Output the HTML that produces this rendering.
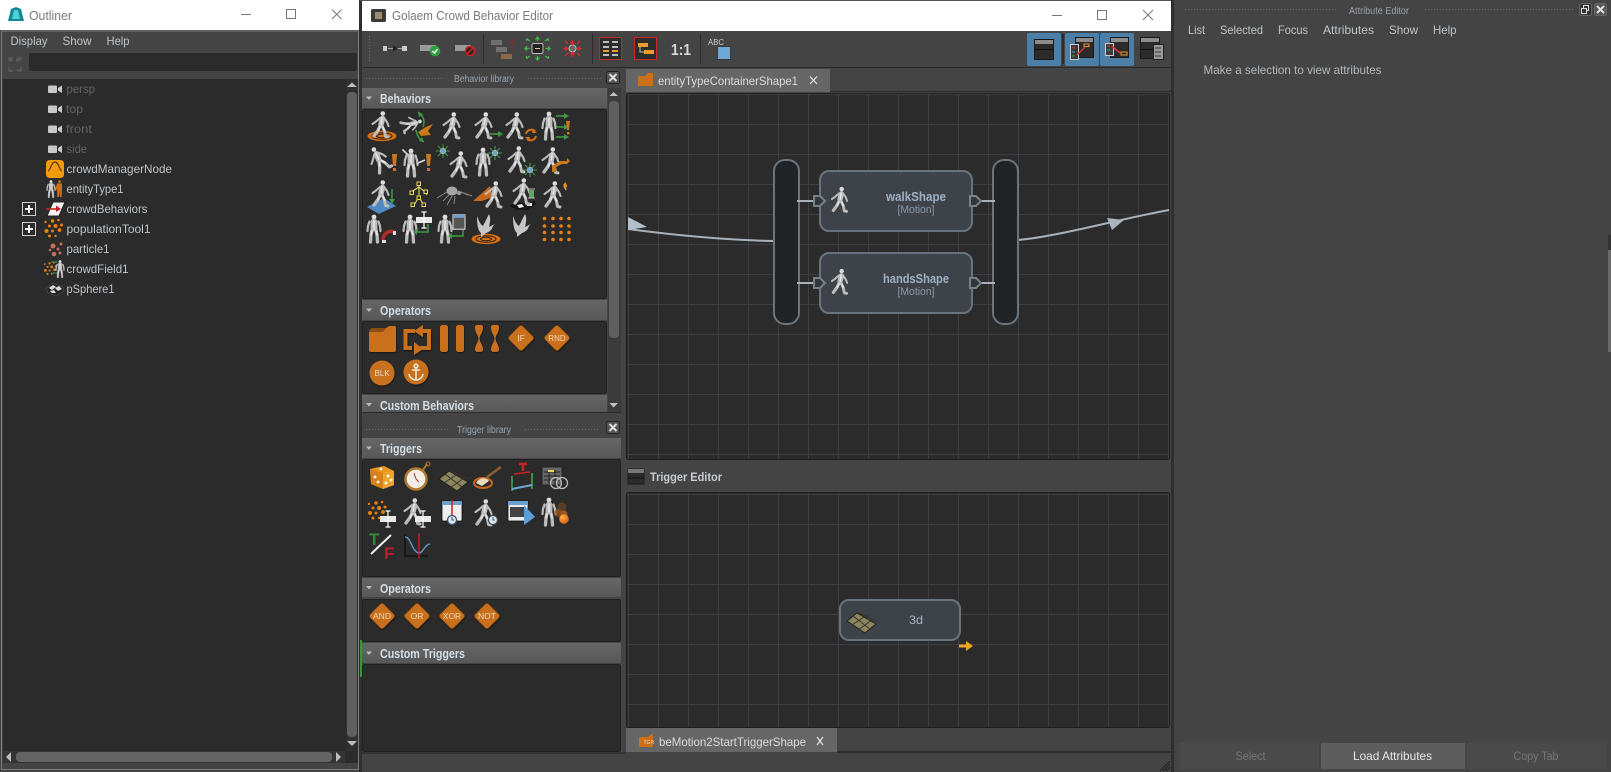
<!DOCTYPE html>
<html><head><meta charset="utf-8"><title>Golaem Crowd Behavior Editor</title>
<style>
html,body{margin:0;padding:0;background:#444;width:1611px;height:772px;overflow:hidden}
svg{display:block}
text{font-family:"Liberation Sans",sans-serif;font-size:12px;fill:#c0c4c7}
.t{font-size:13px;fill:#76797d}
.dim{fill:#636363}
.h{font-weight:bold;font-size:12.5px;fill:#d5dde3}
.sm{font-size:10px;fill:#9aa3ab}
.n{font-weight:bold;font-size:12.5px;fill:#9fb0c2}
.m{font-size:11px;fill:#8c99a7}
.o{font-size:7.5px;fill:#f0d9bd;text-anchor:middle}
</style></head><body>
<svg width="1611" height="772" viewBox="0 0 1611 772" xmlns="http://www.w3.org/2000/svg">
<defs>
<filter id="sh" x="-20%" y="-20%" width="140%" height="140%"><feDropShadow dx="0.6" dy="1" stdDeviation="0.6" flood-color="#111" flood-opacity=".8"/></filter>
<pattern id="g1" patternUnits="userSpaceOnUse" x="628" y="94" width="30" height="30"><rect width="30" height="30" fill="#2b2b2b"/><rect width="30" height="1" fill="#3b3e43"/><rect width="1" height="30" fill="#3b3e43"/></pattern>
<pattern id="g2" patternUnits="userSpaceOnUse" x="628" y="494" width="30" height="30"><rect width="30" height="30" fill="#2b2b2b"/><rect width="30" height="1" fill="#3b3e43"/><rect width="1" height="30" fill="#3b3e43"/></pattern>
<pattern id="dots" patternUnits="userSpaceOnUse" width="3" height="3"><rect width="1" height="1" fill="#6b6b6b"/></pattern>
<linearGradient id="hd" x1="0" y1="0" x2="0" y2="1"><stop offset="0" stop-color="#666"/><stop offset="1" stop-color="#585858"/></linearGradient>
<radialGradient id="ball" cx=".35" cy=".3" r=".8"><stop offset="0" stop-color="#ffb24a"/><stop offset="1" stop-color="#d45a08"/></radialGradient>
<g id="walk" fill="none" stroke="#bcbcbc" stroke-linecap="round" stroke-linejoin="round">
<circle cx="1.800" cy="-11.500" r="2.300" fill="#dcdcdc" stroke="none"/>
<path d="M1.500-6.500L0-.5" stroke-width="5.600"/>
<path d="M-1-7L-5-3.500L-8.500-1" stroke-width="2.100"/>
<path d="M3.500-6.500L6-3L7.500 1" stroke-width="2.100"/>
<path d="M-1 1L-3 5.500L-7 11" stroke-width="3.300"/>
<path d="M1 1L3.500 6L4.500 11.500L7 12" stroke-width="3"/>
<path d="M1.200-7.500L.3-1M-1 2L-3 5.500M2 2L3.500 6" stroke="#e6e6e6" stroke-width="1.500"/>
</g>
<g id="stand" fill="none" stroke="#bcbcbc" stroke-linecap="round" stroke-linejoin="round">
<circle cx="0" cy="-12" r="2.400" fill="#dcdcdc" stroke="none"/>
<path d="M0-7L0-1" stroke-width="6.800"/>
<path d="M-2 1L-3 6L-3.500 13" stroke-width="3.300"/>
<path d="M2 1L3 6L3.500 13" stroke-width="3.300"/>
<path d="M-4.500-7.500L-6-3L-6.500 2" stroke-width="2.200"/>
<path d="M4.500-7.500L6-3L6.500 2" stroke-width="2.200"/>
<path d="M0-8V0M-2 2L-3 6M2 2L3 6" stroke="#e6e6e6" stroke-width="1.500"/>
</g>
<g id="bird" fill="#c6c6c6"><path d="M-9-12C-7-7-6-4-3-2C-1-6 1-10 3-14C5-10 4-5 3-1L9-4L7-2C6 2 3 4 0 5L-5 9L-5 5C-8 3-9-4-9-12Z"/></g>
<g id="star" stroke="#3f9a45" stroke-width="1.100" fill="none"><path d="M0-7V7M-7 0H7M-5-5L5 5M-5 5L5-5"/><circle r="2.700" fill="#6fa4c4" stroke="#b7d3e3" stroke-width=".6"/></g>
<g id="tgt" fill="none"><ellipse rx="14.500" ry="5.200" fill="#d87012"/><ellipse rx="10" ry="3.300" stroke="#2a2018" stroke-width="1"/><ellipse rx="5.500" ry="1.700" stroke="#2a2018" stroke-width="1"/></g>
<g id="tile"><path d="M-14-2L-4-10L15 1L4 10Z" fill="#8b8560" stroke="#24221a" stroke-width="1"/><path d="M-8-7L9 6M-2-10L15-2M-9 2L6-8M-3 7L11-3" stroke="#37352a" stroke-width="1"/></g>
<g id="ibeam"><rect x="-8" y="-3" width="16" height="6" fill="#e8e8e8"/><path d="M-2.500-8H2.500M0-8V8M-2.500 8H2.500" stroke="#fff" stroke-width="1.200" fill="none"/></g>
<g id="clock"><circle r="4.500" fill="#dfe8ee" stroke="#37536a" stroke-width="1.300"/><path d="M0-3V0H2" stroke="#37536a" fill="none"/></g>
<g id="win"><rect x="-10" y="-10" width="20" height="20" fill="#eee" stroke="#111" stroke-width=".8"/><rect x="-10" y="-10" width="20" height="4" fill="#6c9fc9"/></g>
<g id="dia"><rect x="-10" y="-10" width="20" height="20" rx="2.500" transform="rotate(45)" fill="#c8701a" stroke="#8e4c0e" stroke-width=".6"/></g>
<g id="cam"><rect x="-7" y="-3.500" width="9" height="7.500" rx="1" fill="#c9c9c9"/><path d="M3-1L7-3.500V4L3 1.500Z" fill="#c9c9c9"/></g>
<g id="dust" fill="#e8800f"><circle cx="-9" cy="-7" r="1.200"/><circle cx="-2" cy="-8" r="1.700"/><circle cx="4" cy="-9" r="1.300"/><circle cx="-5" cy="-3" r="1.500"/><circle cx="1" cy="-3" r="2"/><circle cx="7" cy="-4" r="1.500"/><circle cx="-8" cy="2" r="2"/><circle cx="-2" cy="2" r="1.500"/><circle cx="5" cy="1" r="1.900"/><circle cx="-5" cy="7" r="1.500"/><circle cx="1" cy="7" r="1.200"/></g>
<g id="bg" ><path d="M0 0H8" stroke="#3f9a45" stroke-width="1.600"/><path d="M8-3L13 0L8 3Z" fill="#3f9a45"/></g>
<path id="hg" d="M475 327Q475 325 477 325H481Q483 325 483 327C483 333 479.500 335 479.500 338.500C479.500 342 483 345 483 350Q483 352 479 352Q475 352 475 350C475 345 478.500 342 478.500 338.500C478.500 335 475 333 475 327Z" fill="#c8701a"/>
</defs>

<rect width="1611" height="772" fill="#444"/>

<!-- Outliner -->
<rect x="0" y="0" width="360" height="30" fill="#fff"/>
<path d="M8 21L11 9L16 7L21 9L24 21Z" fill="#0f8a96"/><path d="M14 10L12 19H20L18 10Z" fill="#50d0d8"/>
<text class="t" x="29" y="20" textLength="43" lengthAdjust="spacingAndGlyphs">Outliner</text>
<path d="M241 14.500H251" stroke="#777" fill="none"/><rect x="286.500" y="9.500" width="9" height="9" fill="none" stroke="#777"/><path d="M332 9.500L341.500 19M341.500 9.500L332 19" stroke="#777" fill="none"/>
<rect x="1" y="30" width="358" height="742" fill="#444"/>
<path d="M1.500 31V769.500H358.500V31H1.500" fill="none" stroke="#7d7d7d"/>
<text x="10.500" y="45" textLength="37" lengthAdjust="spacingAndGlyphs">Display</text><text x="62.500" y="45" textLength="29" lengthAdjust="spacingAndGlyphs">Show</text><text x="106.500" y="45" textLength="23" lengthAdjust="spacingAndGlyphs">Help</text>
<rect x="29" y="53" width="328" height="18" rx="2" fill="#2b2b2b"/>
<g fill="none" stroke="#5c5c5c" stroke-width="1.500"><path d="M9 60V58H13M18 58H21V60M21 67V71H18M13 71H9V67"/></g>
<path d="M9 58L14 60L9 62ZM16 58L22 60L16 62ZM10 69L14 71H9ZM17 69L22 71H17Z" fill="#5c5c5c"/>
<rect x="3" y="79" width="355" height="672" fill="#2b2b2b"/>
<rect x="346" y="79" width="12" height="672" fill="#303030"/>
<path d="M347 87L352 82.500L357 87Z" fill="#bdbdbd"/>
<rect x="347" y="92" width="10" height="645" rx="4" fill="#5f5f5f"/>
<path d="M347 741H357L352 746Z" fill="#bdbdbd"/>
<rect x="3" y="751" width="355" height="12" fill="#343434"/><rect x="345" y="751" width="13" height="12" fill="#2b2b2b"/>
<rect x="16" y="752" width="316" height="10" rx="4" fill="#646464"/>
<path d="M11 752V762L6 757Z" fill="#bdbdbd"/><path d="M336 752V762L341 757Z" fill="#bdbdbd"/>
<use href="#cam" x="55" y="89"/><use href="#cam" x="55" y="109"/><use href="#cam" x="55" y="129"/><use href="#cam" x="55" y="149"/>
<text class="dim" x="66.500" y="93" textLength="28.500" lengthAdjust="spacingAndGlyphs">persp</text>
<text class="dim" x="66" y="113" textLength="17" lengthAdjust="spacingAndGlyphs">top</text>
<text class="dim" x="66" y="133" textLength="26" lengthAdjust="spacingAndGlyphs">front</text>
<text class="dim" x="66.500" y="153" textLength="20.500" lengthAdjust="spacingAndGlyphs">side</text>
<rect x="46" y="160" width="18" height="18" rx="3.500" fill="#f09a0e"/><path d="M48 171C51 170 51 162 55 162C59 162 59 170 62 171" fill="none" stroke="#3e2a08"/>
<g transform="translate(51 189) scale(.62)"><use href="#stand"/></g>
<g transform="translate(59.500 189) scale(.62)"><path d="M0-14.300a2.300 2.300 0 1 0 .1 0ZM-4-9H4V0L3.500 13H.8L0 2L-.8 13H-3.500L-4 0L-6.500 3L-7 1Z" fill="#d06f12"/></g>
<path d="M53 202H65L59 216H47Z" fill="#f4f4f4" stroke="#222"/><path d="M46 209H58" stroke="#c82020" stroke-width="1.600"/><path d="M56 205.500L61 209L56 212Z" fill="#c82020"/>
<g transform="translate(54.500 229)"><use href="#dust"/></g>
<g fill="#c86d5e"><circle cx="53" cy="246" r="2.500"/><circle cx="58" cy="249" r="1.500"/><circle cx="61" cy="244" r="1.500"/><circle cx="50" cy="250" r="1.300"/><circle cx="54" cy="254" r="2.300"/><circle cx="60" cy="253" r="1.500"/></g>
<g transform="translate(51 269) scale(.7)"><use href="#dust"/></g><path d="M51 262H57M51 273H57" stroke="#3f9a45"/>
<g transform="translate(60 269) scale(.62)"><use href="#stand"/></g>
<path d="M46 289L53 283L63 287L64 291L56 296L48 293Z" fill="#222" stroke="#444"/><path d="M49 288L53 285L56 287L52 290ZM55 288L59 286L62 289L58 291ZM50 291L54 290L56 293L52 293Z" fill="#ddd"/>
<text x="66.500" y="173" textLength="105.500" lengthAdjust="spacingAndGlyphs">crowdManagerNode</text>
<text x="66.500" y="193" textLength="57" lengthAdjust="spacingAndGlyphs">entityType1</text>
<text x="66.500" y="213" textLength="81" lengthAdjust="spacingAndGlyphs">crowdBehaviors</text>
<text x="66.500" y="233" textLength="84" lengthAdjust="spacingAndGlyphs">populationTool1</text>
<text x="66.500" y="253" textLength="43" lengthAdjust="spacingAndGlyphs">particle1</text>
<text x="66.500" y="273" textLength="62" lengthAdjust="spacingAndGlyphs">crowdField1</text>
<text x="66.500" y="293" textLength="48" lengthAdjust="spacingAndGlyphs">pSphere1</text>
<g fill="none" stroke="#cfcfcf"><rect x="22.500" y="202.500" width="13" height="13"/><rect x="22.500" y="222.500" width="13" height="13"/></g>
<path d="M25 209H33M29 205V213M25 229H33M29 225V233" stroke="#eee" stroke-width="2"/>

<!-- strip -->
<rect x="359" y="0" width="3" height="772" fill="#2f2f2f"/>
<rect x="360" y="640" width="2" height="37" fill="#2f9a3a"/>

<!-- Editor window -->
<rect x="362" y="0" width="809" height="31" fill="#fff"/>
<rect x="360" y="0" width="812" height="1" fill="#555"/>
<rect x="371" y="9" width="15" height="13" rx="1.500" fill="#3a3a3a"/><rect x="375" y="12" width="7" height="7" fill="#a08a70"/>
<text class="t" x="392" y="20" textLength="161" lengthAdjust="spacingAndGlyphs">Golaem Crowd Behavior Editor</text>
<path d="M1052 15.500H1062" stroke="#777"/><rect x="1097.500" y="10.500" width="9" height="9" fill="none" stroke="#777"/><path d="M1143 10L1153 20M1153 10L1143 20" stroke="#777"/>
<rect x="362" y="31" width="809" height="741" fill="#444"/>
<rect x="369" y="35" width="3" height="28" fill="url(#dots)"/>
<!-- toolbar icons -->
<path d="M388 48.500H404" stroke="#aaa"/><rect x="383" y="46" width="4" height="5" fill="#ccc"/><rect x="402" y="46" width="5" height="5" fill="#ccc"/><path d="M393 45.500L398 48.500L393 51.500Z" fill="#222"/>
<rect x="420" y="45" width="16" height="6" fill="#9a9a9a"/><circle cx="435" cy="51" r="5.300" fill="#2fa040"/><path d="M432.500 51L434.500 53L437.500 49" stroke="#fff" stroke-width="1.400" fill="none"/>
<rect x="455" y="45" width="16" height="6" fill="#9a9a9a"/><circle cx="470" cy="51" r="4.500" fill="#2a2020" stroke="#c22" stroke-width="1.600"/><path d="M467 54L473 48" stroke="#c22" stroke-width="1.600"/>
<rect x="483" y="34" width="1" height="30" fill="#2c2c2c"/>
<rect x="491" y="40" width="11" height="5" fill="#707070"/><rect x="496" y="47" width="11" height="5" fill="#707070"/><rect x="501" y="54" width="11" height="5" fill="#8a6a48"/><path d="M512 52V41M509 43.500L512 39L515 43.500" stroke="#703434" stroke-width="1.400" fill="none"/>
<rect x="532" y="43.500" width="11" height="10" rx="1.500" fill="#222" stroke="#bbb"/><path d="M535 48.500H540" stroke="#e8c888"/>
<g stroke="#3fb84d" stroke-width="1.300" fill="none"><path d="M537.500 41V38M537.500 56V59M529.500 48.500H526M545.500 48.500H549M530 41L527 39M545 41L548 39M530 56L527 58M545 56L548 58"/><path d="M535.500 39.500L537.500 37L539.500 39.500M535.500 57.500L537.500 60L539.500 57.500M527 46.500L525 48.500L527 50.500M548 46.500L550 48.500L548 50.500M528 39H526.500V41M547 39H548.500V41M528 58H526.500V56M547 58H548.500V56"/></g>
<circle cx="572.500" cy="48.500" r="3.500" fill="#666" stroke="#bbb"/>
<g stroke="#e22525" stroke-width="1.300" fill="none"><path d="M572.500 40V44M572.500 57V53M563 48.500H567M582 48.500H578M565 41L568 44M580 41L577 44M565 56L568 53M580 56L577 53"/><path d="M570.500 42L572.500 44.500L574.500 42M570.500 55L572.500 52.500L574.500 55M565 46.500L567.500 48.500L565 50.500M580 46.500L577.500 48.500L580 50.500"/></g>
<rect x="592" y="34" width="1" height="30" fill="#2c2c2c"/>
<rect x="599.500" y="37.500" width="22" height="22" fill="#2c2c2c" stroke="#c62828"/>
<g fill="#bbb"><rect x="603" y="41" width="6" height="2"/><rect x="612" y="41" width="6" height="2"/><rect x="603" y="46" width="6" height="2"/><rect x="612" y="46" width="6" height="2"/><rect x="603" y="54" width="6" height="2"/><rect x="612" y="54" width="6" height="2"/></g><rect x="603" y="50" width="6" height="2" fill="#ef9a2c"/><rect x="612" y="50" width="6" height="2" fill="#ef9a2c"/>
<rect x="634.500" y="37.500" width="22" height="22" fill="#2c2c2c" stroke="#c62828"/>
<rect x="638" y="43" width="10" height="4" fill="#ef9a2c"/><rect x="644" y="50" width="10" height="4" fill="#ef9a2c"/><path d="M640 47V52H644" stroke="#bbb" fill="none"/>
<text x="671" y="55" style="font-size:16px;font-weight:bold;fill:#d8d8d8" textLength="20" lengthAdjust="spacingAndGlyphs">1:1</text>
<rect x="700" y="34" width="1" height="30" fill="#2c2c2c"/>
<text x="708" y="45" style="font-size:8.500px;fill:#ccc" textLength="16" lengthAdjust="spacingAndGlyphs">ABC</text>
<rect x="717.500" y="46.500" width="13" height="13" fill="#6fa8d6" stroke="#3a3a3a"/>
<!-- right toolbar -->
<rect x="1027" y="33" width="34" height="33" rx="2" fill="#4b7fa8"/><rect x="1065" y="33" width="34" height="33" rx="2" fill="#4b7fa8"/><rect x="1100" y="33" width="34" height="33" rx="2" fill="#4b7fa8"/>
<rect x="1062" y="34" width="2" height="30" fill="#2c2c2c"/>
<rect x="1034.500" y="39.500" width="19" height="20" fill="#2b2b2b" stroke="#1a1a1a"/><rect x="1035" y="40" width="18" height="4" fill="#8c8c8c"/><path d="M1035 49.500H1053" stroke="#111"/>
<rect x="1075.500" y="37.500" width="18" height="20" fill="#2b2b2b" stroke="#1a1a1a"/><rect x="1076" y="38" width="17" height="4" fill="#8c8c8c"/><rect x="1084" y="44" width="5" height="2.500" fill="none" stroke="#ef9a2c"/>
<rect x="1070.500" y="44.500" width="8" height="15" fill="#3a3a3a" stroke="#ccc"/><path d="M1072 48h3" stroke="#d33"/><path d="M1072 52h3" stroke="#49b"/><path d="M1072 56h3" stroke="#4a4"/><path d="M1077 55L1085 47" stroke="#d33" stroke-width="1.500"/>
<rect x="1110.500" y="37.500" width="18" height="20" fill="#2b2b2b" stroke="#1a1a1a"/><rect x="1111" y="38" width="17" height="4" fill="#8c8c8c"/><rect x="1121" y="52" width="6" height="3" fill="none" stroke="#ef9a2c"/>
<rect x="1105.500" y="43.500" width="8" height="12" fill="#3a3a3a" stroke="#ccc"/><path d="M1107 46h3" stroke="#d33"/><path d="M1107 50h3" stroke="#49b"/><path d="M1112 46L1120 53" stroke="#d33" stroke-width="1.500"/>
<rect x="1140.500" y="37.500" width="19" height="21" fill="#2b2b2b" stroke="#1a1a1a"/><rect x="1141" y="38" width="18" height="4" fill="#8c8c8c"/><path d="M1141 49.500H1159" stroke="#111"/><rect x="1153.500" y="44.500" width="10" height="15" fill="#9a9a9a" stroke="#222"/><path d="M1155 48h6M1155 52h6M1155 56h6" stroke="#333"/>
<rect x="362" y="67" width="809" height="1" fill="#2a2a2a"/>

<!-- Behavior library -->
<rect x="366" y="76" width="76" height="3" fill="url(#dots)"/><rect x="528" y="76" width="74" height="3" fill="url(#dots)"/>
<text class="sm" x="454" y="82" textLength="60" lengthAdjust="spacingAndGlyphs">Behavior library</text>
<rect x="606.500" y="71.500" width="13" height="12" rx="2" fill="#555" stroke="#222"/><path d="M609.500 74L616.500 81M616.500 74L609.500 81" stroke="#e0e0e0" stroke-width="2"/>
<rect x="362" y="88" width="245" height="20" fill="url(#hd)"/>
<path d="M366 96.500H372L369 100Z" fill="#bbb"/><text class="h" x="380" y="103" textLength="51" lengthAdjust="spacingAndGlyphs">Behaviors</text>
<rect x="362.500" y="109.500" width="244" height="189" rx="2" fill="#2b2b2b" stroke="#202020"/>
<rect x="362" y="300" width="245" height="20" fill="url(#hd)"/>
<path d="M366 308.500H372L369 312Z" fill="#bbb"/><text class="h" x="380" y="315" textLength="51" lengthAdjust="spacingAndGlyphs">Operators</text>
<rect x="362.500" y="321.500" width="244" height="72" rx="2" fill="#2b2b2b" stroke="#202020"/>
<rect x="362" y="395" width="245" height="17" fill="url(#hd)"/>
<path d="M366 403H372L369 406.500Z" fill="#bbb"/><text class="h" x="380" y="410" textLength="94" lengthAdjust="spacingAndGlyphs">Custom Behaviors</text>
<rect x="608" y="88" width="13" height="324" fill="#3b3b3b"/>
<path d="M609.500 96L613.500 92L618 96Z" fill="#c0c0c0"/>
<rect x="609" y="101" width="10" height="237" rx="4" fill="#5f5f5f"/>
<path d="M609.500 403H618L613.500 407.500Z" fill="#c0c0c0"/>
<rect x="362" y="412" width="259" height="1" fill="#2c2c2c"/>

<!-- Behaviors row1 -->
<use href="#tgt" x="382" y="136"/><use href="#walk" x="381" y="125"/>
<g transform="translate(411 124) rotate(65) scale(.8)"><use href="#walk"/></g><path d="M418 112C424 116 425 122 423 127M416 130C417 136 420 140 424 142" stroke="#3f9a45" stroke-width="1.500" fill="none"/><path d="M418 112L423 114L419 117ZM424 142L419 141L422 137Z" fill="#3f9a45"/><path d="M418 132L426 127L433 124L428 131L431 135L421 136Z" fill="#c9781a"/>
<use href="#walk" x="452" y="126"/>
<use href="#walk" x="484" y="126"/><g transform="translate(490 134)"><use href="#bg"/></g>
<use href="#walk" x="515" y="126"/><g fill="none" stroke="#d87012" stroke-width="2"><path d="M526 134A5.500 5.500 0 0 1 535 131"/><path d="M536 136A5.500 5.500 0 0 1 527 139"/></g><path d="M533 129L537 133L532 133ZM529 141L525 137L530 137Z" fill="#d87012"/>
<use href="#stand" x="549" y="126"/><g transform="translate(556 116)"><use href="#bg"/></g><g transform="translate(556 127)"><use href="#bg"/></g><g transform="translate(556 137)"><use href="#bg"/></g><path d="M566 121H570L569 130H567Z" fill="#c9781a"/><rect x="567" y="132" width="2.500" height="2.500" fill="#c9781a"/>
<!-- row2 -->
<g transform="translate(379 160) rotate(-35)"><use href="#walk"/></g><path d="M392 154H397L396 166H393Z" fill="#c9781a"/><rect x="393" y="168" width="3" height="3" fill="#c9781a"/>
<g transform="translate(411 163)"><path d="M-3-8L-8-13" stroke="#ccc" stroke-width="1.900" stroke-linecap="round"/><use href="#stand"/></g><path d="M418 163L425 160" stroke="#ddd" stroke-width="1.500"/><path d="M426 154H431L430 166H427Z" fill="#c9781a"/><rect x="427" y="168" width="3" height="3" fill="#c9781a"/>
<use href="#star" x="443" y="151"/><use href="#walk" x="459" y="165"/>
<use href="#stand" x="483" y="162"/><use href="#star" x="495" y="153"/>
<use href="#walk" x="517" y="160"/><use href="#star" x="530" y="170"/>
<use href="#walk" x="551" y="161"/><path d="M552 172V166L560 161H567V158L570 161L567 164H562L556 167V172Z" fill="#c9781a"/>
<!-- row3 -->
<path d="M367 207L384 198L396 206L379 214Z" fill="#4d8ac0"/><use href="#walk" x="381" y="194"/><path d="M392 189V201" stroke="#3f9a45" stroke-width="1.500"/><path d="M389 199H395L392 204Z" fill="#3f9a45"/>
<g fill="none" stroke="#e6d75a" stroke-width="1.100"><path d="M419 186V197M419 187L411 192L412 194M419 187L425 192L427 195M419 197L414 205L411 207M419 197L423 204L422 207"/></g><g fill="#2b2b2b" stroke="#e6d75a"><rect x="417" y="182" width="3.500" height="3.500"/><rect x="410" y="191" width="3.500" height="3.500"/><rect x="424" y="190" width="3.500" height="3.500"/><rect x="417" y="196" width="3.500" height="3.500"/><rect x="411" y="203" width="3.500" height="3.500"/><rect x="422" y="203" width="3.500" height="3.500"/></g>
<ellipse cx="452" cy="191" rx="5.500" ry="4.500" fill="#a4a4a4"/><ellipse cx="459" cy="193" rx="2.500" ry="2" fill="#999"/><path d="M449 195L443 201M452 196L447 205M455 196L454 204M447 192L437 198M461 192L468 195M458 191L472 196" stroke="#8a8a8a" fill="none"/>
<path d="M473 201L490 186L493 197L482 201Z" fill="#c9681a"/><use href="#walk" x="494" y="195" />
<path d="M510 206L517 202L526 204L535 201L536 204L528 210H517Z" fill="#151515"/><path d="M517 205L522 204L524 207L519 208Z" fill="#eee"/><path d="M526 203L532 203L532 206L527 206Z" fill="#eee"/><use href="#walk" x="522" y="192"/><rect x="529" y="190" width="5" height="8" fill="#60a060"/><path d="M528 189H535M528 198H535" stroke="#bbb"/>
<use href="#walk" x="553" y="195"/><path d="M564 184L566 190" stroke="#aa8" stroke-width="1.500"/><path d="M565 182C568 185 567 188 565 189C563 188 563 185 565 182Z" fill="#e88a14"/>
<!-- row4 -->
<use href="#stand" x="374" y="229"/><path d="M383 240C383 232 392 229 395 233" stroke="#b22a2a" stroke-width="3.500" fill="none"/><rect x="382" y="240" width="4" height="3" fill="#ddd"/><rect x="393" y="231" width="3" height="4" fill="#ddd"/>
<use href="#stand" x="410" y="229"/><use href="#ibeam" x="424" y="220"/><path d="M428 224V232H417" stroke="#3f9a45" stroke-width="1.500" fill="none"/><path d="M417 229L413 232L417 235Z" fill="#3f9a45"/>
<use href="#stand" x="445" y="229"/><g transform="translate(459 222) scale(.6)"><rect x="-10" y="-12" width="20" height="24" fill="#555" stroke="#eee" stroke-width="1.600"/><rect x="-10" y="-12" width="20" height="5" fill="#6c9fc9"/></g><path d="M463 230V236H452" stroke="#3f9a45" stroke-width="1.500" fill="none"/><path d="M452 233L448 236L452 239Z" fill="#3f9a45"/>
<use href="#tgt" x="486" y="239"/><use href="#bird" x="486" y="228"/>
<use href="#bird" x="522" y="228"/>
<g fill="#e8800f"><circle cx="544.500" cy="218.500" r="1.800"/><circle cx="553" cy="218.500" r="1.800"/><circle cx="561" cy="218.500" r="1.800"/><circle cx="569" cy="218.500" r="1.800"/><circle cx="544.500" cy="226" r="1.800"/><circle cx="553" cy="226" r="1.800"/><circle cx="561" cy="226" r="1.800"/><circle cx="569" cy="226" r="1.800"/><circle cx="544.500" cy="232.500" r="1.800"/><circle cx="553" cy="232.500" r="1.800"/><circle cx="561" cy="232.500" r="1.800"/><circle cx="569" cy="232.500" r="1.800"/><circle cx="544.500" cy="239.500" r="1.800"/><circle cx="553" cy="239.500" r="1.800"/><circle cx="561" cy="239.500" r="1.800"/><circle cx="569" cy="239.500" r="1.800"/></g>

<!-- Operators -->
<g filter="url(#sh)">
<path d="M369 333Q369 331 371 330L383 330L389 326H394Q396 326 396 328V350Q396 352 394 352H371Q369 352 369 350Z" fill="#c8701a"/>
<path d="M369 331Q370 328 373 328H386L383 332H369Z" fill="#8a5012"/>
<g fill="none" stroke="#c8701a" stroke-width="4"><path d="M415 331H405.500V348H412"/><path d="M420 348H429V331H423"/></g><path d="M423 325L414 331L423 337ZM414 342L423 349L414 355Z" fill="#c8701a"/>
<rect x="440" y="325" width="8" height="27" rx="2.500" fill="#c8701a"/><rect x="456" y="325" width="8" height="27" rx="2.500" fill="#c8701a"/>
<use href="#hg"/><use href="#hg" x="16"/>
<g transform="translate(521 338) scale(.95)"><use href="#dia"/></g>
<g transform="translate(557 338) scale(.95)"><use href="#dia"/></g>
<circle cx="382" cy="373" r="12.500" fill="#c8701a"/>
<circle cx="416" cy="372" r="12.500" fill="#c8701a"/>
</g>
<text class="o" x="521" y="341" style="font-size:8.500px">IF</text>
<text class="o" x="557" y="341" style="font-size:8px">RND</text>
<text class="o" x="382" y="376" style="font-size:8px">BLK</text>
<g fill="none" stroke="#eed" stroke-width="1.500"><circle cx="416" cy="366" r="1.800"/><path d="M416 368V380M412 370H420M409 374C410 379 414 380 416 380C418 380 422 379 423 374"/></g>

<!-- Trigger library -->
<rect x="366" y="427" width="82" height="3" fill="url(#dots)"/><rect x="523" y="427" width="76" height="3" fill="url(#dots)"/>
<text class="sm" x="457" y="433" textLength="54" lengthAdjust="spacingAndGlyphs">Trigger library</text>
<rect x="606.500" y="421.500" width="13" height="12" rx="2" fill="#555" stroke="#222"/><path d="M609.500 424L616.500 431M616.500 424L609.500 431" stroke="#e0e0e0" stroke-width="2"/>
<rect x="362" y="438" width="259" height="20" fill="url(#hd)"/>
<path d="M366 446.500H372L369 450Z" fill="#bbb"/><text class="h" x="380" y="453" textLength="42" lengthAdjust="spacingAndGlyphs">Triggers</text>
<rect x="362.500" y="459.500" width="258" height="117" rx="2" fill="#2b2b2b" stroke="#202020"/>
<rect x="362" y="578" width="259" height="19" fill="url(#hd)"/>
<path d="M366 586H372L369 589.500Z" fill="#bbb"/><text class="h" x="380" y="593" textLength="51" lengthAdjust="spacingAndGlyphs">Operators</text>
<rect x="362.500" y="599.500" width="258" height="42" rx="2" fill="#2b2b2b" stroke="#202020"/>
<rect x="362" y="643" width="259" height="20" fill="url(#hd)"/>
<path d="M366 651.500H372L369 655Z" fill="#bbb"/><text class="h" x="380" y="658" textLength="85" lengthAdjust="spacingAndGlyphs">Custom Triggers</text>
<rect x="362.500" y="664.500" width="258" height="87" rx="2" fill="#2b2b2b" stroke="#202020"/>

<!-- Triggers row 1 -->
<path d="M370 469L384 466L394 471V485L383 489L371 484Z" fill="#e8981c"/><path d="M370 469L383 473L394 471V485L383 489Z" fill="#eea52c"/><path d="M383 473V489L371 484L370 469Z" fill="#d8811a"/><g fill="#fff"><circle cx="388" cy="476" r="1.400"/><circle cx="391" cy="480" r="1.400"/><circle cx="386" cy="483" r="1.400"/><circle cx="375" cy="477" r="1.400"/><circle cx="378" cy="482" r="1.400"/><circle cx="381" cy="469" r="1.300"/></g>
<circle cx="416" cy="479" r="10.500" fill="#f2efe8" stroke="#b07a2c" stroke-width="2.500"/><path d="M423 470L427 464" stroke="#b07a2c" stroke-width="2"/><circle cx="428" cy="464" r="2" fill="none" stroke="#b07a2c"/><path d="M416 479L414 473M416 479L419 482" stroke="#a33" fill="none"/>
<use href="#tile" x="453" y="481"/>
<ellipse cx="483" cy="483" rx="9" ry="5" fill="none" stroke="#c9681a" stroke-width="2"/><path d="M476 483C480 476 487 478 489 481L482 486Z" fill="#e8dcc0"/><path d="M487 477L501 467" stroke="#8a6038" stroke-width="2.500"/>
<path d="M512 476V491" stroke="#3fb84d" stroke-width="1.400"/><path d="M532 473V489" stroke="#3fb84d" stroke-width="1.400"/><path d="M512 489L532 485" stroke="#6fa8d6" stroke-width="2"/><path d="M514 474L530 472" stroke="#c22" stroke-width="1.500"/><path d="M519 464H527M523 464V471" stroke="#c22" stroke-width="2.500"/>
<rect x="542" y="467" width="20" height="18" rx="1" fill="#666" stroke="#222"/><path d="M544 472H560M544 476H560M544 480H560M549 470V484M555 470V484" stroke="#222"/><rect x="548" y="470" width="6" height="2" fill="#e8d85a"/><circle cx="556" cy="483" r="5.500" fill="none" stroke="#bbb" stroke-width="1.300"/><circle cx="562" cy="483" r="5.500" fill="none" stroke="#bbb" stroke-width="1.300"/>
<!-- Triggers row 2 -->
<g transform="translate(378 511)"><use href="#dust"/></g><g transform="translate(388 519)"><use href="#ibeam"/></g>
<use href="#walk" x="413" y="512"/><use href="#ibeam" x="423" y="519"/>
<g transform="translate(452 511)"><use href="#win"/></g><path d="M452 500V521" stroke="#c22" stroke-width="1.500"/><use href="#clock" x="452" y="520"/>
<use href="#walk" x="484" y="513"/><use href="#clock" x="493" y="520"/>
<g transform="translate(518 511)"><use href="#win"/><rect x="-8" y="-4" width="16" height="10" fill="#444"/></g><path d="M524 505L535 517L524 525Z" fill="#5a9fd8"/>
<use href="#stand" x="549" y="512"/><circle cx="562" cy="507" r="4.500" fill="#7a4a20" opacity=".6"/><circle cx="558" cy="513" r="4" fill="#a05a20" opacity=".7"/><circle cx="564" cy="514" r="3.500" fill="#b8601a" opacity=".8"/><circle cx="564" cy="519" r="4.800" fill="url(#ball)"/>
<!-- Triggers row 3 -->
<text x="369" y="545" style="font-size:17px;font-weight:bold;fill:#2f8a3a">T</text><text x="384" y="559" style="font-size:17px;font-weight:bold;fill:#b8202a">F</text><path d="M371 554L391 535" stroke="#f0f0f0" stroke-width="2"/>
<path d="M405 534V556H428" stroke="#111" stroke-width="1.500" fill="none"/><path d="M405 537C411 537 412 552 419 553C423 553 425 544 430 544" stroke="#5ea0d4" stroke-width="1.300" fill="none"/><path d="M419 533V558" stroke="#c22" stroke-width="1.300"/>

<!-- Trigger operators -->
<g filter="url(#sh)">
<g transform="translate(382 616) scale(.95)"><use href="#dia"/></g>
<g transform="translate(417 616) scale(.95)"><use href="#dia"/></g>
<g transform="translate(452 616) scale(.95)"><use href="#dia"/></g>
<g transform="translate(487 616) scale(.95)"><use href="#dia"/></g>
</g>
<text class="o" x="382" y="619" style="font-size:8.500px">AND</text>
<text class="o" x="417" y="619" style="font-size:8.500px">OR</text>
<text class="o" x="452" y="619" style="font-size:8.500px">XOR</text>
<text class="o" x="487" y="619" style="font-size:8.500px">NOT</text>

<!-- Main graph -->
<rect x="622" y="68" width="549" height="24" fill="#444"/>
<rect x="626" y="69" width="204" height="23" fill="#666"/>
<path d="M638 76H645L648 73H653V86H638Z" fill="#c8701a"/>
<text x="658" y="85" style="font-size:12px;fill:#dcdcdc" textLength="140" lengthAdjust="spacingAndGlyphs">entityTypeContainerShape1</text>
<path d="M810 76.500L817 84M817 76.500L810 84" stroke="#e4e4e4" stroke-width="1.200"/>
<rect x="830" y="91" width="341" height="1" fill="#2c2c2c"/>
<rect x="626.500" y="93.500" width="543" height="366" rx="2" fill="url(#g1)" stroke="#1e1e1e"/>
<path d="M628 229C680 236 725 240 773 241" fill="none" stroke="#a9b2ba" stroke-width="2"/>
<path d="M628 217L647 227L628 230Z" fill="#b2c0cc"/>
<path d="M1018 240C1060 236 1115 220 1169 210" fill="none" stroke="#a9b2ba" stroke-width="2"/>
<path d="M1107 218L1124 220L1112 230Z" fill="#a9b6c2"/>
<rect x="774" y="160" width="25" height="164" rx="11" fill="#212426" stroke="#68747e" stroke-width="2"/>
<rect x="993" y="160" width="25" height="164" rx="11" fill="#212426" stroke="#68747e" stroke-width="2"/>
<rect x="820" y="171" width="152" height="60" rx="9" fill="#3e434a" stroke="#68737d" stroke-width="2"/>
<rect x="820" y="253" width="152" height="60" rx="9" fill="#3e434a" stroke="#68737d" stroke-width="2"/>
<g stroke="#a9b2ba" stroke-width="2"><path d="M797 201H813M981 201H995M797 283H813M981 283H995"/></g>
<g fill="#33373c" stroke="#76818b" stroke-width="2"><path d="M814 196H820L825 201L820 206H814Z"/><path d="M970 196H976L981 201L976 206H970Z"/><path d="M814 278H820L825 283L820 288H814Z"/><path d="M970 278H976L981 283L976 288H970Z"/></g>
<g transform="translate(840 200) scale(.95)"><use href="#walk"/></g>
<g transform="translate(840 282) scale(.95)"><use href="#walk"/></g>
<text class="n" x="886" y="201" textLength="60" lengthAdjust="spacingAndGlyphs">walkShape</text>
<text class="m" x="897.500" y="213" textLength="37" lengthAdjust="spacingAndGlyphs">[Motion]</text>
<text class="n" x="883" y="283" textLength="66" lengthAdjust="spacingAndGlyphs">handsShape</text>
<text class="m" x="897.500" y="295" textLength="37" lengthAdjust="spacingAndGlyphs">[Motion]</text>

<!-- Trigger editor -->
<rect x="622" y="460" width="549" height="32" fill="#444"/>
<rect x="628" y="469" width="16" height="15" fill="#2b2b2b" stroke="#1a1a1a"/><rect x="628" y="469" width="16" height="4" fill="#777"/><path d="M629 478H643" stroke="#111"/>
<text x="650" y="481" style="font-size:12px;font-weight:bold;fill:#c6ccd0" textLength="72" lengthAdjust="spacingAndGlyphs">Trigger Editor</text>
<rect x="626.500" y="492.500" width="543" height="235" rx="2" fill="url(#g2)" stroke="#1e1e1e"/>
<rect x="840" y="600" width="120" height="40" rx="9" fill="#3e434a" stroke="#68737d" stroke-width="2"/>
<use href="#tile" x="861" y="623"/>
<text x="909" y="624" style="font-size:12px;fill:#a9b4bf" textLength="14" lengthAdjust="spacingAndGlyphs">3d</text>
<path d="M959 644.500H966V641L973 646L966 651V647.500H959Z" fill="#eda521"/>

<!-- bottom tab -->
<rect x="626" y="728" width="211" height="24" fill="#666"/>
<path d="M639 737H648L653 733V747H639Z" fill="#c8701a"/>
<text x="643.500" y="744" style="font-size:5px;fill:#f0d9bd">TGR</text>
<text x="659" y="746" style="font-size:12px;fill:#dcdcdc" textLength="147" lengthAdjust="spacingAndGlyphs">beMotion2StartTriggerShape</text>
<path d="M817 737L823 745M823 737L817 745" stroke="#e4e4e4" stroke-width="1.200"/>
<rect x="837" y="751" width="334" height="2" fill="#2e2e2e"/>
<rect x="362" y="752" width="264" height="2" fill="#333"/>
<path d="M1160 771L1170 761M1163 771L1170 764M1166 771L1170 767" stroke="#1f1f1f"/>

<!-- Attribute Editor -->
<rect x="1171" y="0" width="3" height="772" fill="#2f2f2f"/>
<rect x="1174" y="0" width="437" height="772" fill="#444"/>
<rect x="1183" y="9" width="154" height="3" fill="url(#dots)"/><rect x="1423" y="9" width="150" height="3" fill="url(#dots)"/>
<text class="sm" x="1349" y="14" textLength="60" lengthAdjust="spacingAndGlyphs">Attribute Editor</text>
<rect x="1579.500" y="3.500" width="12" height="12" rx="2" fill="#333" stroke="#666"/><rect x="1583.500" y="5.500" width="5" height="5" fill="none" stroke="#ddd"/><rect x="1581.500" y="8.500" width="5" height="5" fill="#333" stroke="#ddd"/>
<rect x="1594.500" y="3.500" width="12" height="12" rx="2" fill="#555" stroke="#666"/><path d="M1597 6L1604 13M1604 6L1597 13" stroke="#e0e0e0" stroke-width="2"/>
<text x="1188" y="34" textLength="17" lengthAdjust="spacingAndGlyphs">List</text>
<text x="1220" y="34" textLength="43" lengthAdjust="spacingAndGlyphs">Selected</text>
<text x="1278" y="34" textLength="30" lengthAdjust="spacingAndGlyphs">Focus</text>
<text x="1323" y="34" textLength="51" lengthAdjust="spacingAndGlyphs">Attributes</text>
<text x="1389" y="34" textLength="29" lengthAdjust="spacingAndGlyphs">Show</text>
<text x="1433" y="34" textLength="23.500" lengthAdjust="spacingAndGlyphs">Help</text>
<text x="1203.500" y="74" style="fill:#b4b8bb" textLength="178" lengthAdjust="spacingAndGlyphs">Make a selection to view attributes</text>
<rect x="1180" y="743" width="139" height="26" fill="#4a4a4a"/>
<rect x="1321" y="743" width="144" height="26" fill="#5d5d5d"/>
<rect x="1467" y="743" width="139" height="26" fill="#4a4a4a"/>
<text x="1235.500" y="760" style="fill:#767676" textLength="30" lengthAdjust="spacingAndGlyphs">Select</text>
<text x="1353" y="760" style="fill:#e6e6e6" textLength="79" lengthAdjust="spacingAndGlyphs">Load Attributes</text>
<text x="1513.500" y="760" style="fill:#767676" textLength="45" lengthAdjust="spacingAndGlyphs">Copy Tab</text>
<rect x="1608" y="235" width="3" height="15" fill="#333"/>
<rect x="1608" y="250" width="3" height="102" fill="#6a6a6a"/>
</svg>
</body></html>
